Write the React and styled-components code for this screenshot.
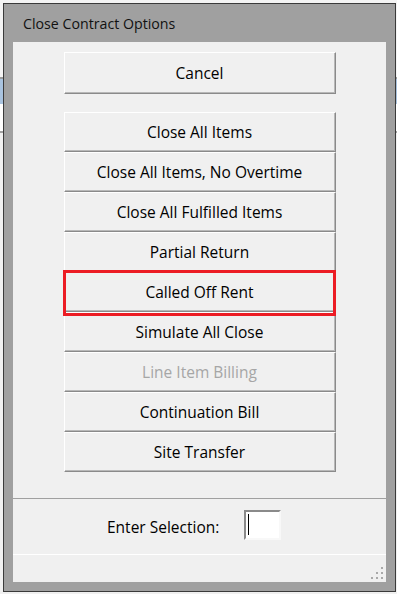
import React from 'react'
import styled, { createGlobalStyle } from 'styled-components'

const GlobalStyle = createGlobalStyle`
  html, body {
    margin: 0;
    padding: 0;
  }
  body {
    font-family: "Open Sans", "Noto Sans", sans-serif;
    background: #f0f0f0;
  }
`

const options = [
  { label: 'Close All Items' },
  { label: 'Close All Items, No Overtime' },
  { label: 'Close All Fulfilled Items' },
  { label: 'Partial Return' },
  { label: 'Called Off Rent', highlighted: true },
  { label: 'Simulate All Close' },
  { label: 'Line Item Billing', disabled: true },
  { label: 'Continuation Bill' },
  { label: 'Site Transfer' },
]

export default function App() {
  return (
    <Desktop>
      <GlobalStyle />
      <Window>
        <TitleBar>Close Contract Options</TitleBar>
        <Client>
          <MainPane>
            <CancelButton>Cancel</CancelButton>
            <OptionList>
              {options.map((o) => (
                <OptionButton key={o.label} $highlighted={o.highlighted} $disabled={o.disabled}>
                  {o.label}
                </OptionButton>
              ))}
            </OptionList>
          </MainPane>
          <SelectionPane>
            <Label>Enter Selection:</Label>
            <SelectionBox>
              <Caret />
            </SelectionBox>
          </SelectionPane>
          <StatusBar>
            <svg width="12" height="12" viewBox="0 0 12 12">
              <rect x="10" y="0" width="2" height="2" fill="#a9a9a9" />
              <rect x="5" y="5" width="2" height="2" fill="#a9a9a9" />
              <rect x="10" y="5" width="2" height="2" fill="#a9a9a9" />
              <rect x="0" y="10" width="2" height="2" fill="#a9a9a9" />
              <rect x="5" y="10" width="2" height="2" fill="#a9a9a9" />
              <rect x="10" y="10" width="2" height="2" fill="#a9a9a9" />
            </svg>
          </StatusBar>
        </Client>
      </Window>
    </Desktop>
  )
}

const Desktop = styled.div`
  width: 397px;
  height: 594px;
  box-sizing: border-box;
  padding: 3px 1px 2px 3px;
  background: linear-gradient(
    to bottom,
    #f4f4f4 0 77px,
    #9a9a9a 77px 79px,
    #a9c3df 79px 104px,
    #ffffff 104px 131px,
    #a0a0a0 131px 133px,
    #f0f0f0 133px
  );
`

const Window = styled.div`
  height: 100%;
  box-sizing: border-box;
  border: 1px solid #3a3a3a;
  background: #a0a0a0;
  padding: 0 9px 9px;
  display: flex;
  flex-direction: column;
`

const TitleBar = styled.div`
  height: 38px;
  flex-shrink: 0;
  display: flex;
  align-items: center;
  padding-left: 10px;
  font-size: 14.2px;
  color: #111;
`

const Client = styled.div`
  flex: 1;
  background: #f0f0f0;
  display: flex;
  flex-direction: column;
`

const MainPane = styled.div`
  height: 457px;
  flex-shrink: 0;
  box-sizing: border-box;
  border-bottom: 1px solid #a0a0a0;
  display: flex;
  flex-direction: column;
  align-items: center;
  padding-top: 10px;
`

const Button = styled.div`
  width: 272px;
  height: 40px;
  box-sizing: border-box;
  border: 1px solid;
  border-color: #ffffff #8a8a8a #8a8a8a #ffffff;
  box-shadow: inset -1px -1px 0 #b8b8b8;
  background: #f0f0f0;
  display: flex;
  align-items: center;
  justify-content: center;
  font-size: 15.5px;
  color: #000;
`

const CancelButton = styled(Button)`
  height: 42px;
  margin-bottom: 18px;
`

const OptionList = styled.div`
  display: flex;
  flex-direction: column;
`

const OptionButton = styled(Button)`
  position: relative;
  color: ${(p) => (p.$disabled ? '#a6a6a6' : '#000')};

  ${(p) =>
    p.$highlighted &&
    `
    &::after {
      content: '';
      position: absolute;
      top: -3px;
      left: -2px;
      right: -1px;
      bottom: -5px;
      border: 3px solid #ec1c24;
      z-index: 1;
      pointer-events: none;
    }
  `}
`

const SelectionPane = styled.div`
  height: 56px;
  flex-shrink: 0;
  box-sizing: border-box;
  border-bottom: 1px solid #ffffff;
  display: flex;
  align-items: center;
  padding-left: 94px;
  gap: 25px;
`

const Label = styled.span`
  font-size: 15.5px;
  color: #000;
`

const SelectionBox = styled.div`
  width: 37px;
  height: 30px;
  box-sizing: border-box;
  border: 2px solid;
  border-color: #8a8a8a #f8f8f8 #f8f8f8 #8a8a8a;
  background: #ffffff;
  padding: 2px 0 0 2px;
  margin-top: -3px;
`

const Caret = styled.div`
  width: 1px;
  height: 21px;
  background: #000;
`

const StatusBar = styled.div`
  flex: 1;
  display: flex;
  justify-content: flex-end;
  align-items: flex-end;
  padding: 0 3px 3px 0;
`
